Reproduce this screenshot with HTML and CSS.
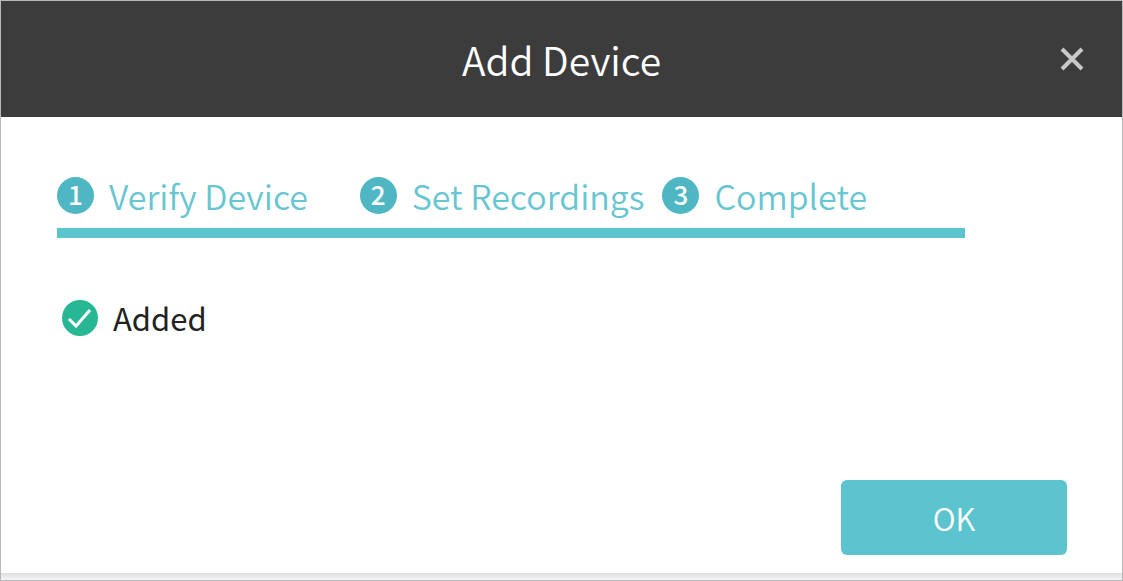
FILE: index.html
```html
<!DOCTYPE html>
<html lang="en">
<head>
    <meta charset="UTF-8">
    <meta name="viewport" content="width=device-width, initial-scale=1.0">
    <title>Add Device</title>
    <link rel="stylesheet" href="styles.css">
</head>
<body>

<div class="dialog" role="dialog" aria-labelledby="dialogTitle">
    <header class="dialog-header">
        <h1 id="dialogTitle" class="dialog-title">Add Device</h1>
        <button type="button" class="close-btn" aria-label="Close">
            <svg width="26" height="26" viewBox="0 0 26 26" fill="none" stroke="#c8c8c8" stroke-width="4">
                <path d="M2 3L22 23M22 3L2 23"/>
            </svg>
        </button>
    </header>

    <main class="dialog-body">
        <ol class="steps">
            <li class="step"><span class="step-number">1</span>Verify Device</li>
            <li class="step"><span class="step-number">2</span>Set Recordings</li>
            <li class="step"><span class="step-number">3</span>Complete</li>
        </ol>

        <p class="status">
            <svg width="36" height="36" viewBox="0 0 36 36" fill="none" aria-hidden="true">
                <circle cx="18" cy="18" r="18" fill="#27b794"/>
                <path d="M7 19L14 26L28 10" stroke="#fff" stroke-width="3"/>
            </svg>
            Added
        </p>
    </main>

    <footer class="dialog-footer">
        <button type="button" class="ok-btn">OK</button>
    </footer>
    <div class="dialog-edge"></div>
</div>

</body>
</html>
```
FILE: styles.css
```css
* {
    box-sizing: border-box;
}
body {
    margin: 0;
    font-family: "Noto Sans CJK SC", "Noto Sans", sans-serif;
    font-size: 31px;
    background-color: #fff;
}
.dialog {
    display: flex;
    flex-direction: column;
    min-height: 100vh;
    border: 1px solid #b8b8bc;
    background-color: #fff;
}
.dialog-header {
    display: grid;
    grid-template-columns: 1fr auto 1fr;
    align-items: center;
    height: 116px;
    padding: 0 36px;
    background-color: #3c3c3c;
    color: #fff;
}
.dialog-title {
    grid-column: 2;
    margin: 0;
    font-size: 39px;
    font-weight: 350;
    line-height: 56px;
}
.close-btn {
    display: flex;
    justify-self: end;
    padding: 0;
    border: none;
    background: none;
    cursor: pointer;
}
.dialog-body {
    flex: 1;
    padding: 56px;
}
.steps {
    display: grid;
    grid-template-columns: repeat(3, 1fr);
    width: 90%;
    margin: 0;
    padding: 0 0 10px;
    border-bottom: 10px solid #5bc4ce;
    list-style: none;
}
.step {
    display: flex;
    align-items: center;
    gap: 15px;
    color: #68c6d2;
    font-size: 34px;
    font-weight: 350;
    line-height: 45px;
    white-space: nowrap;
}
.step-number {
    width: 37px;
    height: 37px;
    border-radius: 50%;
    background-color: #4fb7c3;
    color: #fff;
    font-size: 26px;
    font-weight: 500;
    line-height: 34px;
    text-align: center;
}
.status {
    display: flex;
    align-items: center;
    gap: 15px;
    margin: 56px 0 0;
    padding-left: 5px;
    color: #222;
    line-height: 48px;
}
.dialog-footer {
    display: flex;
    justify-content: flex-end;
    padding: 0 55px 18px;
}
.ok-btn {
    width: 226px;
    height: 75px;
    padding: 0;
    border: none;
    border-radius: 6px;
    background-color: #5bc4ce;
    color: #fff;
    font-family: inherit;
    font-size: 31px;
    font-weight: 350;
    cursor: pointer;
}
.dialog-edge {
    height: 7px;
    background: linear-gradient(#dedede, #f4f4f4);
}
```
